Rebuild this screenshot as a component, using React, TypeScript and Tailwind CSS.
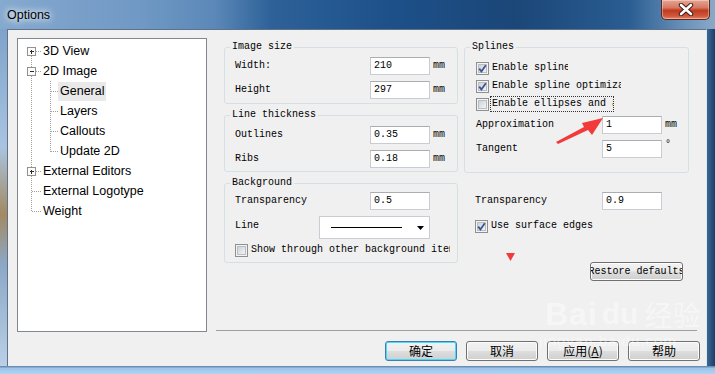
import type { ReactNode } from 'react';

const mono = "font-['Liberation_Mono','DejaVu_Sans_Mono',monospace] text-[10px] leading-[12px] text-black";

function TextBox({ value, w = 'w-[60px]' }: { value: string; w?: string }) {
  return (
    <div className={`${w} h-[18px] bg-white border border-[#c9ccd3] border-t-[#abadb3] flex items-center pl-[3px] ${mono}`}>
      {value}
    </div>
  );
}

function CheckBox({ checked }: { checked?: boolean }) {
  return (
    <svg width="13" height="13" viewBox="0 0 13 13" className="shrink-0">
      <defs>
        <linearGradient id="cbg" x1="0" y1="0" x2="1" y2="1">
          <stop offset="0" stopColor="#cbcfd5" />
          <stop offset="1" stopColor="#f6f6f6" />
        </linearGradient>
      </defs>
      <rect x="0.5" y="0.5" width="12" height="12" fill="#f4f4f4" stroke="#8e8f8f" />
      <rect x="2.5" y="2.5" width="8" height="8" fill="url(#cbg)" stroke="#b9bcc1" />
      {checked && (
        <path d="M3.2 6.6 L5.4 9.4 L9.8 3.2" fill="none" stroke="#3d5592" strokeWidth="1.8" />
      )}
    </svg>
  );
}

// fieldset + legend; padding goes on the inner div so the legend stays put
function Group({ title, className = '', inner = '', children }: { title: string; className?: string; inner?: string; children: ReactNode }) {
  return (
    <fieldset className={`border border-[#d5dfe5] rounded-[3px] ${className}`}>
      <legend className={`ml-[5px] px-[2px] ${mono}`}>{title}</legend>
      <div className={inner}>{children}</div>
    </fieldset>
  );
}

function Row({ label, value, unit, lw = 'w-[135px]' }: { label: string; value: string; unit?: string; lw?: string }) {
  return (
    <div className="flex items-center h-[18px]">
      <span className={`${lw} shrink-0 ${mono}`}>{label}</span>
      <TextBox value={value} />
      {unit && <span className={`ml-[3px] ${mono} ${unit === '°' ? '-mt-[8px]' : ''}`}>{unit}</span>}
    </div>
  );
}

function WinButton({ children, primary }: { children: ReactNode; primary?: boolean }) {
  return (
    <div
      className={`w-[72px] h-[20px] rounded-[3px] border flex items-center justify-center text-[12px] text-black font-['Noto_Sans_CJK_SC',sans-serif] bg-[linear-gradient(#f2f2f2_0%,#ebebeb_48%,#dddddd_52%,#cfcfcf_100%)] ${
        primary ? 'border-[#3c7fb1] shadow-[inset_0_0_0_1px_#48d8fb]' : 'border-[#707070] shadow-[inset_0_0_0_1px_#fcfcfc]'
      }`}
    >
      {children}
    </div>
  );
}

const treeRows: { label: string; level: number; selected?: boolean }[] = [
  { label: '3D View', level: 0 },
  { label: '2D Image', level: 0 },
  { label: 'General', level: 1, selected: true },
  { label: 'Layers', level: 1 },
  { label: 'Callouts', level: 1 },
  { label: 'Update 2D', level: 1 },
  { label: 'External Editors', level: 0 },
  { label: 'External Logotype', level: 0 },
  { label: 'Weight', level: 0 },
];

function TreeLines() {
  const cy = (i: number) => 12.5 + 20 * i;
  const dot = { stroke: '#a0a0a0', strokeDasharray: '1 1', shapeRendering: 'crispEdges' as const };
  const box = (i: number, plus: boolean) => (
    <g key={`b${i}`}>
      <rect x="9.5" y={cy(i) - 4} width="8" height="8" fill="#fbfbfb" stroke="#919191" shapeRendering="crispEdges" />
      <line x1="11.5" y1={cy(i)} x2="16" y2={cy(i)} stroke="#2d2d2d" shapeRendering="crispEdges" />
      {plus && <line x1="13.5" y1={cy(i) - 2} x2="13.5" y2={cy(i) + 2.5} stroke="#2d2d2d" shapeRendering="crispEdges" />}
    </g>
  );
  return (
    <svg className="absolute left-0 top-0" width="60" height="190">
      <line x1="13.5" y1={cy(0)} x2="13.5" y2={cy(8)} {...dot} />
      {[0, 1, 6, 7, 8].map((i) => (
        <line key={i} x1="14" y1={cy(i)} x2="23" y2={cy(i)} {...dot} />
      ))}
      <line x1="32.5" y1="42" x2="32.5" y2={cy(5)} {...dot} />
      {[2, 3, 4, 5].map((i) => (
        <line key={`c${i}`} x1="33" y1={cy(i)} x2="41" y2={cy(i)} {...dot} />
      ))}
      {box(0, true)}
      {box(1, false)}
      {box(6, true)}
    </svg>
  );
}

function Tree() {
  return (
    <div className="relative w-[190px] h-[294px] shrink-0 bg-white border border-[#828790] pt-[2px]">
      <TreeLines />
      {treeRows.map((r) => (
        <div
          key={r.label}
          className={`relative h-[20px] flex items-center ${r.level === 0 ? 'pl-[25px]' : 'pl-[42px]'}`}
        >
          <span
            className={`h-[19px] flex items-center px-[2px] -ml-[2px] text-[12.5px] text-black font-['Liberation_Sans',Arial,sans-serif] ${
              r.selected ? 'bg-[#e9e9e9]' : ''
            }`}
          >
            {r.label}
          </span>
        </div>
      ))}
    </div>
  );
}

function CheckRow({ label, checked, clip, focus }: { label: string; checked?: boolean; clip: string; focus?: boolean }) {
  return (
    <div className="flex items-center h-[18px]">
      <CheckBox checked={checked} />
      <span
        className={`${clip} ml-[1px] h-[16px] flex items-center whitespace-nowrap overflow-hidden pl-[1px] border ${
          focus ? 'border-dotted border-[#333]' : 'border-transparent'
        } ${mono}`}
      >
        {label}
      </span>
    </div>
  );
}

function GeneralPane() {
  return (
    <div className="w-[481px] h-[293px] ml-[9px] border-b border-[#a0a0a0] flex pt-[3px] pl-[8px]">
      <div className="w-[234px] shrink-0 flex flex-col">
        <Group title="Image size" inner="pl-[10px] pt-[4px] pb-[4px]">
          <Row label="Width:" value="210" unit="mm" />
          <div className="h-[6px]" />
          <Row label="Height" value="297" unit="mm" />
        </Group>
        <Group title="Line thickness" className="mt-[5px]" inner="pl-[10px] pt-[5px] pb-[3px]">
          <Row label="Outlines" value="0.35" unit="mm" />
          <div className="h-[6px]" />
          <Row label="Ribs" value="0.18" unit="mm" />
        </Group>
        <Group title="Background" className="mt-[5px]" inner="pl-[10px] pt-[3px] pb-[3px]">
          <Row label="Transparency" value="0.5" />
          <div className="flex items-center h-[23px] mt-[6px]">
            <span className={`w-[84px] shrink-0 -mt-[4px] ${mono}`}>Line</span>
            <div className="w-[111px] h-[23px] bg-white border border-[#c9ccd3] flex items-center pl-[11px] pr-[5px]">
              <div className="w-[71px] h-[1px] bg-black" />
              <svg width="7" height="4" viewBox="0 0 7 4" className="ml-auto mt-[1px]">
                <path d="M0 0 H7 L3.5 4 Z" fill="#000" />
              </svg>
            </div>
          </div>
          <div className="mt-[2px]">
            <CheckRow label="Show through other background items" clip="w-[202px]" />
          </div>
        </Group>
      </div>
      <div className="w-[225px] ml-[6px] shrink-0 flex flex-col">
        <Group title="Splines" inner="pl-[11px] pt-[6px] pb-[14px]">
          <CheckRow label="Enable spline" checked clip="w-[79px]" />
          <CheckRow label="Enable spline optimization" checked clip="w-[132px]" />
          <CheckRow label="Enable ellipses and arcs" clip="w-[124px]" focus />
          <div className="h-[3px]" />
          <Row label="Approximation" value="1" unit="mm" lw="w-[126px]" />
          <div className="h-[6px]" />
          <Row label="Tangent" value="5" unit="°" lw="w-[126px]" />
        </Group>
        <div className="pl-[11px] mt-[19px]">
          <Row label="Transparency" value="0.9" lw="w-[127px]" />
          <div className="mt-[7px]">
            <CheckRow label="Use surface edges" checked clip="w-[140px]" />
          </div>
          <div className="ml-[115px] mt-[27px] w-[93px] h-[19px] rounded-[3px] border border-[#707070] shadow-[inset_0_0_0_1px_#fcfcfc] bg-[linear-gradient(#f2f2f2_0%,#ebebeb_48%,#dddddd_52%,#cfcfcf_100%)] flex items-center justify-center overflow-hidden">
            <span className={`whitespace-nowrap ${mono}`}>Restore defaults</span>
          </div>
        </div>
      </div>
    </div>
  );
}

function CloseButton() {
  return (
    <div className="mr-[5px] w-[49px] h-[20px] rounded-b-[5px] border border-t-0 border-[#5c2a22] bg-[linear-gradient(#e8a493_0%,#d47a63_40%,#c13a20_55%,#cf5a3c_85%,#e6876a_100%)] shadow-[inset_0_0_0_1px_rgba(255,255,255,0.35)] flex items-center justify-center">
      <svg width="16" height="13" viewBox="0 0 16 13">
        <path d="M3 2 L13 11 M13 2 L3 11" stroke="#3b1a14" strokeWidth="4.4" strokeLinecap="round" />
        <path d="M3 2 L13 11 M13 2 L3 11" stroke="#ffffff" strokeWidth="2.6" strokeLinecap="round" />
      </svg>
    </div>
  );
}

function Annotations() {
  return (
    <svg className="absolute left-0 top-0 pointer-events-none" width="715" height="374">
      <polygon points="556,142 584,127 582,123 603,118 592,135 588,130 558,144" fill="#f23a3a" />
      <polygon points="506,253 515,253 510.5,261" fill="#f23a3a" />
    </svg>
  );
}

function Watermark() {
  return (
    <div className="absolute left-[545px] top-[298px] pointer-events-none text-white/45 font-['Liberation_Sans',sans-serif]">
      <div className="flex items-end">
        <span className="text-[32px] font-bold leading-[32px] tracking-[1px]">Bai</span>
        <span className="text-[30px] font-bold leading-[32px] ml-[4px]">du</span>
        <span className="text-[28px] leading-[32px] font-['Noto_Sans_CJK_SC',sans-serif] ml-[6px]">经验</span>
      </div>
      <div className="text-[15px] leading-[16px] mt-[3px] -ml-[6px] tracking-[1px] text-white/40">jingyan.baidu.com</div>
    </div>
  );
}

export default function App() {
  return (
    <div className="relative w-[715px] h-[374px] overflow-hidden flex flex-col bg-[#1f4b7c]">
      <div className="h-[29px] shrink-0 flex items-start justify-between bg-[linear-gradient(90deg,#86a9cf_0%,#6f98c4_20%,#5b88b8_30%,#2d6198_38%,#1d5089_55%,#1b4678_72%,#2a5d92_88%,#6d93bb_96%,#8aa9c7_100%)]">
        <span className="pl-[7px] pt-[7px] text-[12.5px] leading-[16px] text-black font-['Liberation_Sans',sans-serif] [text-shadow:0_0_6px_#ffffff,0_0_10px_#ffffff]">
          Options
        </span>
        <CloseButton />
      </div>
      <div className="flex flex-1 min-h-0">
        <div className="w-[7px] shrink-0 bg-[linear-gradient(#7ea3ca_0%,#a9c4e0_35%,#a38a62_55%,#8ca8c6_70%,#b9d0e7_100%)]" />
        <div className="w-[700px] shrink-0 bg-[#f0f0f0] border-t border-l border-[#5f7286] border-r border-r-[#dfe7ef] pl-[9px] pt-[8px] flex flex-col">
          <div className="flex">
            <Tree />
            <GeneralPane />
          </div>
          <div className="flex justify-end gap-[9px] pr-[6px] mt-[9px]">
            <WinButton primary>确定</WinButton>
            <WinButton>取消</WinButton>
            <WinButton>
              应用(<span className="underline">A</span>)
            </WinButton>
            <WinButton>帮助</WinButton>
          </div>
        </div>
        <div className="flex-1 bg-[linear-gradient(90deg,#3d6894,#1a3f69)]" />
      </div>
      <div className="h-[8px] shrink-0 bg-[linear-gradient(#5d7fa3_0%,#9ec4ea_30%,#b2d3f3_100%)]" />
      <Annotations />
      <Watermark />
    </div>
  );
}
